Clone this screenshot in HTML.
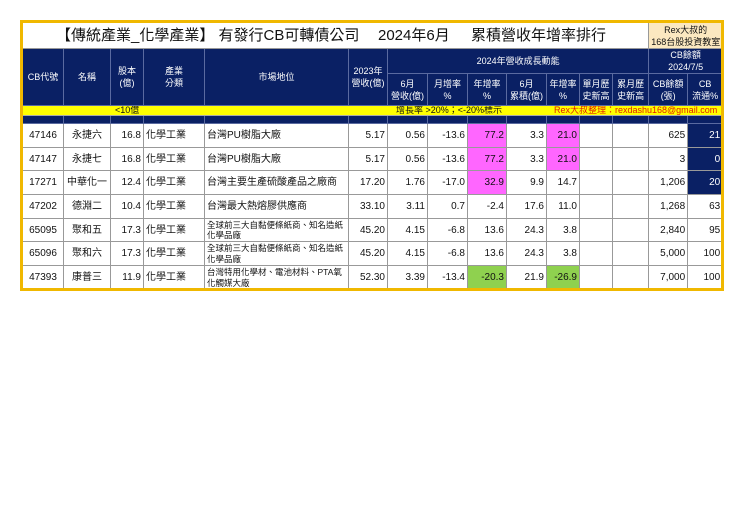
<!DOCTYPE html>
<html><head><meta charset="utf-8"><style>
body{margin:0;width:740px;height:523px;background:#fff;position:relative;font-family:"Liberation Sans","Noto Sans CJK TC",sans-serif;overflow:hidden}
.frame{position:absolute;left:20px;top:20px;width:698px;height:265px;border:3px solid #f0b800;z-index:2;pointer-events:none}
table{position:absolute;left:22px;top:22px;border-collapse:collapse;table-layout:fixed;width:700px}
td{border:1px solid #b8b8b8;padding:0 2px;font-size:9px;line-height:11px;color:#111;white-space:nowrap;overflow:hidden}
.h td{background:#0a2064;color:#fff;border-color:#5a6aa0;text-align:center;line-height:12px;font-size:9px}
.r{text-align:right}.c{text-align:center}
.m{background:#ff66ff}.g{background:#8fd14f}.n{background:#0a2064;color:#fff}
.t td{border-color:#999;font-size:10px}
.t td.w{white-space:normal;line-height:10.5px;font-size:8.5px}
</style></head><body>
<div class="frame"></div>
<table>
<colgroup><col style="width:41px"><col style="width:47px"><col style="width:33px"><col style="width:61px"><col style="width:144px"><col style="width:39px"><col style="width:40px"><col style="width:40px"><col style="width:39px"><col style="width:40px"><col style="width:33px"><col style="width:33px"><col style="width:36px"><col style="width:39px"><col style="width:35px"></colgroup>
<tr style="height:26px"><td colspan="13" style="position:relative;border-color:#999;font-size:15px;padding:0">
<span style="position:absolute;left:33px;top:5px;line-height:16px">【傳統產業_化學產業】 有發行CB可轉債公司</span>
<span style="position:absolute;left:355px;top:5px;line-height:16px">2024年6月</span>
<span style="position:absolute;left:448px;top:5px;line-height:16px">累積營收年增率排行</span></td>
<td colspan="2" style="background:#fbe8c0;text-align:center;font-size:9px;line-height:12px;border-color:#999">Rex大叔的<br>168台股投資教室</td></tr>
<tr class="h" style="height:22px"><td rowspan="2">CB代號</td><td rowspan="2">名稱</td><td rowspan="2">股本<br>(億)</td><td rowspan="2">產業<br>分類</td><td rowspan="2">市場地位</td><td rowspan="2">2023年<br>營收(億)</td><td colspan="7">2024年營收成長動能</td><td colspan="2">CB餘額<br>2024/7/5</td></tr>
<tr class="h" style="height:32px"><td>6月<br>營收(億)</td><td>月增率<br>%</td><td>年增率<br>%</td><td>6月<br>累積(億)</td><td>年增率<br>%</td><td>單月歷<br>史新高</td><td>累月歷<br>史新高</td><td>CB餘額<br>(張)</td><td>CB<br>流通%</td></tr>
<tr style="height:10px"><td colspan="15" style="background:#ffff00;position:relative;padding:0;font-size:9px;line-height:9px;height:9px;border-color:#aaa"><span style="position:absolute;left:92px;top:0">&lt;10億</span><span style="position:absolute;left:373px;top:0">增長率 &gt;20%；&lt;-20%標示</span><span style="position:absolute;left:531px;top:0;color:#e02000">Rex大叔整理：rexdashu168@gmail.com</span></td></tr>
<tr class="h" style="height:8px"><td style="height:7px;line-height:7px"></td><td></td><td></td><td></td><td></td><td></td><td></td><td></td><td></td><td></td><td></td><td></td><td></td><td></td><td></td></tr>
<tr class="t" style="height:24px"><td class="c">47146</td><td class="c">永捷六</td><td class="r">16.8</td><td>化學工業</td><td>台灣PU樹脂大廠</td><td class="r">5.17</td><td class="r">0.56</td><td class="r">-13.6</td><td class="r m">77.2</td><td class="r">3.3</td><td class="r m">21.0</td><td></td><td></td><td class="r">625</td><td class="r n">21</td></tr>
<tr class="t" style="height:23px"><td class="c">47147</td><td class="c">永捷七</td><td class="r">16.8</td><td>化學工業</td><td>台灣PU樹脂大廠</td><td class="r">5.17</td><td class="r">0.56</td><td class="r">-13.6</td><td class="r m">77.2</td><td class="r">3.3</td><td class="r m">21.0</td><td></td><td></td><td class="r">3</td><td class="r n">0</td></tr>
<tr class="t" style="height:24px"><td class="c">17271</td><td class="c">中華化一</td><td class="r">12.4</td><td>化學工業</td><td>台灣主要生產硫酸產品之廠商</td><td class="r">17.20</td><td class="r">1.76</td><td class="r">-17.0</td><td class="r m">32.9</td><td class="r">9.9</td><td class="r">14.7</td><td></td><td></td><td class="r">1,206</td><td class="r n">20</td></tr>
<tr class="t" style="height:24px"><td class="c">47202</td><td class="c">德淵二</td><td class="r">10.4</td><td>化學工業</td><td>台灣最大熱熔膠供應商</td><td class="r">33.10</td><td class="r">3.11</td><td class="r">0.7</td><td class="r">-2.4</td><td class="r">17.6</td><td class="r">11.0</td><td></td><td></td><td class="r">1,268</td><td class="r">63</td></tr>
<tr class="t" style="height:23px"><td class="c">65095</td><td class="c">聚和五</td><td class="r">17.3</td><td>化學工業</td><td class="w">全球前三大自黏便條紙商、知名造紙化學品廠</td><td class="r">45.20</td><td class="r">4.15</td><td class="r">-6.8</td><td class="r">13.6</td><td class="r">24.3</td><td class="r">3.8</td><td></td><td></td><td class="r">2,840</td><td class="r">95</td></tr>
<tr class="t" style="height:24px"><td class="c">65096</td><td class="c">聚和六</td><td class="r">17.3</td><td>化學工業</td><td class="w">全球前三大自黏便條紙商、知名造紙化學品廠</td><td class="r">45.20</td><td class="r">4.15</td><td class="r">-6.8</td><td class="r">13.6</td><td class="r">24.3</td><td class="r">3.8</td><td></td><td></td><td class="r">5,000</td><td class="r">100</td></tr>
<tr class="t" style="height:24px"><td class="c">47393</td><td class="c">康普三</td><td class="r">11.9</td><td>化學工業</td><td class="w">台灣特用化學材、電池材料、PTA氧化觸媒大廠</td><td class="r">52.30</td><td class="r">3.39</td><td class="r">-13.4</td><td class="r g">-20.3</td><td class="r">21.9</td><td class="r g">-26.9</td><td></td><td></td><td class="r">7,000</td><td class="r">100</td></tr>
</table>
</body></html>
